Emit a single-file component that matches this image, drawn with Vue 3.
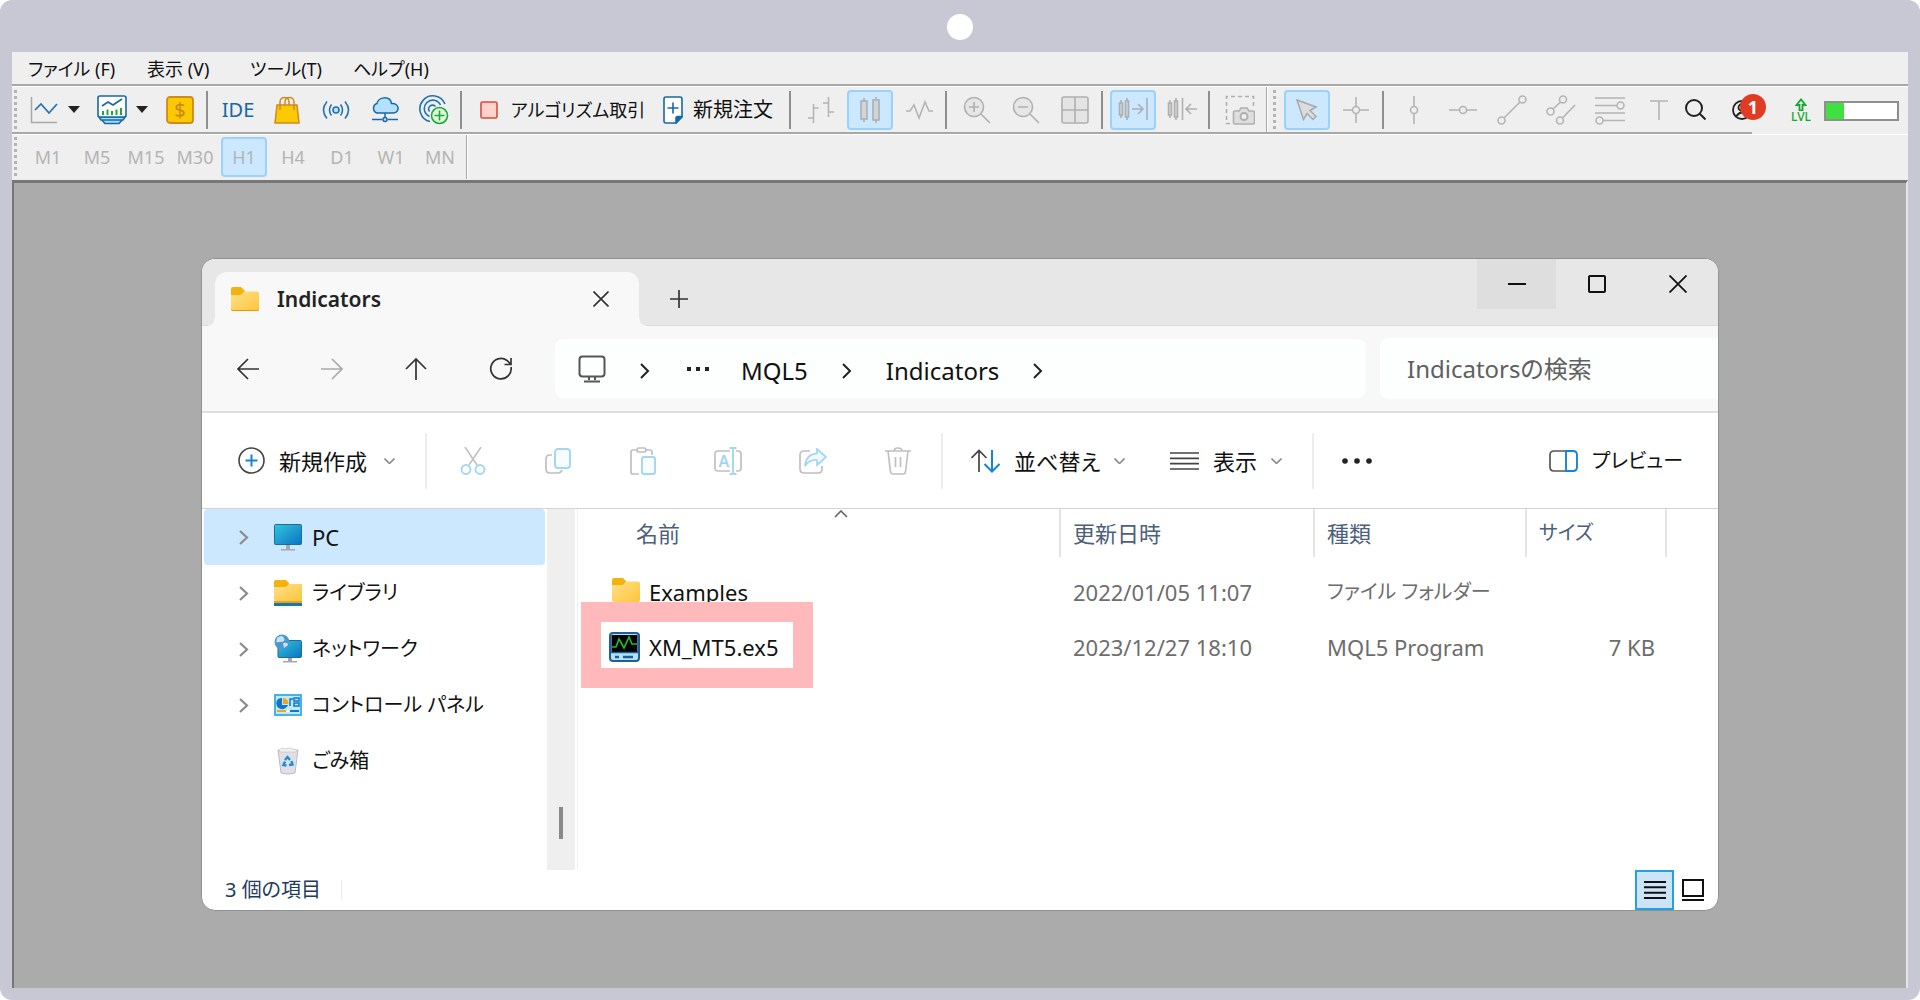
<script setup>
import { ref } from 'vue'

const menus = ['ファイル (F)', '表示 (V)', 'ツール(T)', 'ヘルプ(H)']
const periods = ['M1', 'M5', 'M15', 'M30', 'H1', 'H4', 'D1', 'W1', 'MN']
const period = ref('H1')
const search = ref('')
const tree = [
  { id: 'pc', label: 'PC', open: true, kana: false },
  { id: 'lib', label: 'ライブラリ', open: true, kana: true },
  { id: 'net', label: 'ネットワーク', open: true, kana: true },
  { id: 'cpl', label: 'コントロール パネル', open: true, kana: true },
  { id: 'bin', label: 'ごみ箱', open: false, kana: true },
]
const current = ref('pc')
</script>

<template>
  <div class="frame">
    <header class="bezel"><span class="camera"></span></header>
    <div class="app">
      <nav class="menu">
        <button v-for="m in menus" :key="m" class="menu-item">{{ m }}</button>
      </nav>

      <div class="bar">
        <div class="strip">
          <i class="grip"></i>
          <button class="tool drop" aria-label="Chart">
            <span class="face"><svg width="28" height="28" viewBox="0 0 28 28" fill="none"><path d="M1.500 1V26.500H27" stroke="#a8a8a8" stroke-width="1.500"/><path d="M5 14l6-6 8 9 8-9" stroke="#2273b4" stroke-width="1.700"/></svg></span>
            <svg class="tri" width="12" height="7" viewBox="0 0 12 7"><path d="M0 0h12L6 7z" fill="#222"/></svg>
          </button>
          <button class="tool drop" aria-label="Template">
            <span class="face"><svg width="30" height="30" viewBox="0 0 30 30" fill="none" stroke="#1668a8" stroke-width="1.600"><path d="M4 24l4 4.500h14l4-4.500z" fill="#a8dcff"/><path d="M2 22l2 3h22l2-3z" fill="#a8dcff"/><rect x="1" y="1" width="28" height="21" rx="2" fill="#fff"/><path d="M5 11l6-4 5 3 9-6"/><path d="M6 16v4M10.500 14.500V20M15 16v4M19.500 14.500V20M24 13v7" stroke="#1cab30" stroke-width="2"/></svg></span>
            <svg class="tri" width="12" height="7" viewBox="0 0 12 7"><path d="M0 0h12L6 7z" fill="#222"/></svg>
          </button>
          <button class="tool" aria-label="Symbols"><svg width="28" height="28" viewBox="0 0 28 28"><rect x="1" y="1" width="26" height="26" rx="3" fill="#fbc900" stroke="#cf8a1c" stroke-width="1.800"/><text x="14" y="21" text-anchor="middle" font-size="20" fill="#c98513">$</text></svg></button>
          <i class="sep"></i>
          <button class="tool ide">IDE</button>
          <button class="tool" aria-label="Market"><svg width="26" height="28" viewBox="0 0 26 28" fill="none" stroke="#cf8a1c" stroke-width="1.500"><path d="M3 9h20l2 18H1z" fill="#fbc900"/><path d="M6 14V6c0-6 9-6 9 0v3M11 9V6c0-6 9-6 9 0v8"/></svg></button>
          <button class="tool" aria-label="Signals"><svg width="28" height="20" viewBox="0 0 28 20" fill="none" stroke="#2273b4" stroke-width="1.600"><circle cx="14" cy="10" r="3" fill="#b5e0ff"/><path d="M9.500 4.500q-4 5.500 0 11M18.500 4.500q4 5.500 0 11M5 1.500q-7 8.500 0 17M23 1.500q7 8.500 0 17"/></svg></button>
          <button class="tool" aria-label="VPS"><svg width="28" height="26" viewBox="0 0 28 26" fill="none" stroke="#1668a8" stroke-width="1.500"><path d="M6 16a5 5 0 0 1 0-9.500C7 0 19-2 20.500 6.500 29 6 29 16 22 16z" fill="#b5e0ff"/><path d="M14 16v5M1 22.500h10M17 22.500h10"/><circle cx="14" cy="22.500" r="2" fill="#b5e0ff"/></svg></button>
          <button class="tool" aria-label="Copy trading"><svg width="30" height="30" viewBox="0 0 30 30" fill="none" stroke="#2273b4" stroke-width="1.600"><path d="M11 26.500A13 13 0 1 1 26 9M10.500 21.500A8.500 8.500 0 1 1 21.500 10M10.500 16.500a3.600 3.600 0 1 1 6-5"/><circle cx="20.500" cy="20.500" r="8" fill="#dff8df" stroke="#1cab30"/><path d="M20.500 15.500v10M15.500 20.500h10" stroke="#1cab30"/></svg></button>
          <i class="sep"></i>
          <button class="tool wide algo"><svg width="18" height="18" viewBox="0 0 18 18"><rect x="1" y="1" width="16" height="16" rx="1.500" fill="#ffd2cb" stroke="#dd4a3f" stroke-width="1.600"/></svg><span>アルゴリズム取引</span></button>
          <button class="tool wide order"><svg width="20" height="28" viewBox="0 0 20 28" fill="none" stroke="#1668a8" stroke-width="1.600"><path d="M3 1h14q2 0 2 2v18l-6 6H3q-2 0-2-2V3q0-2 2-2z" fill="#fff"/><path d="M13 27v-5q0-1.500 1.500-1.500H19z" fill="#1668a8"/><path d="M10 6.500v11M4.500 12h11"/></svg><span>新規注文</span></button>
          <i class="sep"></i>
          <button class="tool" aria-label="Bars"><svg width="28" height="28" viewBox="0 0 28 28" fill="none" stroke="#b4b4b4" stroke-width="1.600"><path d="M6.500 8v19M1 22h5.500M6.500 12h5M21.500 1v20M16 7h5.500M21.500 16H27"/></svg></button>
          <button class="tool on" aria-label="Candles"><svg width="24" height="28" viewBox="0 0 24 28" fill="#d4d4d4" stroke="#a9b0b5" stroke-width="1.600"><path d="M6 2v24M18 1v26"/><rect x="3" y="5" width="6" height="18"/><rect x="15" y="4" width="6" height="20"/></svg></button>
          <button class="tool" aria-label="Line"><svg width="28" height="20" viewBox="0 0 28 20" fill="none" stroke="#b4b4b4" stroke-width="1.600"><path d="M1 11h4l4-6 5 13 6-16 4 9h4"/></svg></button>
          <i class="sep"></i>
          <button class="tool" aria-label="Zoom in"><svg width="28" height="28" viewBox="0 0 28 28" fill="#e6e6e6" stroke="#b0b0b0" stroke-width="1.600"><circle cx="11" cy="11" r="9.500"/><path d="M18 18l9 9M11 6v10M6 11h10"/></svg></button>
          <button class="tool" aria-label="Zoom out"><svg width="28" height="28" viewBox="0 0 28 28" fill="#e6e6e6" stroke="#b0b0b0" stroke-width="1.600"><circle cx="11" cy="11" r="9.500"/><path d="M18 18l9 9M6 11h10"/></svg></button>
          <button class="tool" aria-label="Tile"><svg width="28" height="28" viewBox="0 0 28 28" fill="#e4e4e4" stroke="#b0b0b0" stroke-width="1.600"><rect x="1" y="1" width="26" height="26" rx="2"/><path d="M14 1v26M1 14h26"/></svg></button>
          <i class="sep"></i>
          <button class="tool on" aria-label="Auto scroll"><svg width="30" height="26" viewBox="0 0 30 26" fill="none" stroke="#a9b0b5" stroke-width="1.600"><path d="M3 3v18M9 1v22M29 1v22M14 12h11M20 7l5 5-5 5"/><path d="M1.500 6h3v12h-3zM7.500 4h3v16h-3z" fill="#d4d4d4"/></svg></button>
          <button class="tool" aria-label="Shift"><svg width="30" height="26" viewBox="0 0 30 26" fill="none" stroke="#b0b0b0" stroke-width="1.600"><path d="M3 3v18M9 1v22M15.500 1v22M30 12H19M24 7l-5 5 5 5"/><path d="M1.500 6h3v12h-3zM7.500 4h3v16h-3z" fill="#d4d4d4"/></svg></button>
          <i class="sep"></i>
          <button class="tool" aria-label="Screenshot"><svg width="30" height="30" viewBox="0 0 30 30" fill="none" stroke="#b0b0b0" stroke-width="1.600"><path d="M5 28.500H1.500V1.500h27V13" stroke-dasharray="4 3"/><path d="M10 16h4l2-3h6l2 3h4q1.500 0 1.500 1.500v10q0 1.500-1.500 1.500H10q-1.500 0-1.500-1.500v-10Q8.500 16 10 16z" fill="#dedede"/><circle cx="19" cy="21.500" r="3.500" fill="#eee" stroke-width="2"/></svg></button>
          <i class="edge"></i>
          <i class="grip second"></i>
          <button class="tool on" aria-label="Cursor"><svg width="22" height="22" viewBox="0 0 22 22"><path d="M1 1l19 7-6 3.500 6 6-3 3-6-6-3.500 6z" fill="#dcdcdc" stroke="#a9a9a9" stroke-width="1.500"/></svg></button>
          <button class="tool" aria-label="Crosshair"><svg width="28" height="28" viewBox="0 0 28 28" fill="none" stroke="#b4b4b4" stroke-width="1.600"><circle cx="14" cy="14" r="3.500"/><path d="M14 1v9.500M14 17.500V27M1 14h9.500M17.500 14H27"/></svg></button>
          <i class="sep"></i>
          <button class="tool" aria-label="Vertical line"><svg width="28" height="28" viewBox="0 0 28 28" fill="none" stroke="#b4b4b4" stroke-width="1.600"><circle cx="14" cy="14" r="3.500"/><path d="M14 0v10.500M14 17.500V28"/></svg></button>
          <button class="tool" aria-label="Horizontal line"><svg width="28" height="28" viewBox="0 0 28 28" fill="none" stroke="#b4b4b4" stroke-width="1.600"><circle cx="14" cy="14" r="3.500"/><path d="M0 14h10.500M17.500 14H28"/></svg></button>
          <button class="tool" aria-label="Trend line"><svg width="30" height="30" viewBox="0 0 30 30" fill="none" stroke="#b4b4b4" stroke-width="1.600"><circle cx="4.500" cy="25.500" r="3.500"/><circle cx="25.500" cy="4.500" r="3.500"/><path d="M7 23L23 7"/></svg></button>
          <button class="tool" aria-label="Channel"><svg width="30" height="30" viewBox="0 0 30 30" fill="none" stroke="#b4b4b4" stroke-width="1.600"><circle cx="4.500" cy="16.500" r="3.500"/><circle cx="17" cy="4.500" r="3.500"/><circle cx="14" cy="25.500" r="3.500"/><path d="M7 14l7.500-7M16.500 23L29 10"/></svg></button>
          <button class="tool" aria-label="Fibonacci"><svg width="30" height="30" viewBox="0 0 30 30" fill="none" stroke="#b4b4b4" stroke-width="1.600"><circle cx="25.500" cy="10.500" r="3.500"/><circle cx="4.500" cy="25.500" r="3.500"/><path d="M0 3h30M0 10.500h22M0 18h30M8 25.500h22"/></svg></button>
          <button class="tool" aria-label="Text"><svg width="20" height="22" viewBox="0 0 20 22" fill="none" stroke="#b4b4b4" stroke-width="1.600"><path d="M1 2h18M10 2v19"/></svg></button>
          <button class="plain find" aria-label="Search"><svg width="21" height="21" viewBox="0 0 21 21" fill="none" stroke="#222" stroke-width="2"><circle cx="9" cy="9" r="8"/><path d="M14.500 14.500l6 6"/></svg></button>
          <button class="plain account" aria-label="Account"><svg width="20" height="20" viewBox="0 0 20 20" fill="none" stroke="#222" stroke-width="1.800"><circle cx="10" cy="10" r="9"/><circle cx="10" cy="7.500" r="3.500"/><path d="M4 16.500q6-8 12 0"/></svg><b class="badge">1</b></button>
        </div>
        <div class="link">
          <span class="lvl"><svg width="12" height="13" viewBox="0 0 12 13" fill="none" stroke="#12a92c" stroke-width="1.800"><path d="M4.500 12.500V7H1.500L6 1.500 10.500 7h-3v5.500z"/></svg><span>LVL</span></span>
          <span class="meter"><i></i></span>
        </div>
      </div>

      <div class="periods">
        <i class="grip"></i>
        <button v-for="p in periods" :key="p" class="tool period" :class="{ on: p === period }" @click="period = p">{{ p }}</button>
        <i class="edge"></i>
      </div>

      <main class="desk">
        <section class="window">
          <div class="tabs">
            <div class="tab">
              <svg width="28" height="24" viewBox="0 0 28 24"><defs><linearGradient id="fold" x1="0" y1="0" x2="1" y2="1"><stop offset="0" stop-color="#ffe08a"/><stop offset="1" stop-color="#fdc63a"/></linearGradient></defs><path d="M0 10V2q0-2 2-2h8l4 4v6z" fill="#f3b30e"/><path d="M0 8h9q2 0 4-3.500h13q2 0 2 2V22q0 2-2 2H2q-2 0-2-2z" fill="url(#fold)"/><path d="M0 21.500Q0 24 2 24h24q2 0 2-2.500-1 1.500-2 1.500H2q-1 0-2-1.500z" fill="#de9a12"/></svg>
              <h1>Indicators</h1>
              <button class="plain" aria-label="Close tab"><svg width="16" height="16" viewBox="0 0 16 16" stroke="#333" stroke-width="1.700"><path d="M.5.5l15 15M15.500.5l-15 15"/></svg></button>
            </div>
            <button class="plain add" aria-label="New tab"><svg width="18" height="18" viewBox="0 0 18 18" stroke="#333" stroke-width="1.700"><path d="M9 0v18M0 9h18"/></svg></button>
            <div class="caption">
              <button class="plain min" aria-label="Minimize"><svg width="18" height="18" viewBox="0 0 18 18" stroke="#111" stroke-width="2"><path d="M0 9h18"/></svg></button>
              <button class="plain" aria-label="Maximize"><svg width="18" height="18" viewBox="0 0 18 18" stroke="#111" stroke-width="2" fill="none"><rect x="1" y="1" width="16" height="16" rx="1"/></svg></button>
              <button class="plain" aria-label="Close"><svg width="18" height="18" viewBox="0 0 18 18" stroke="#111" stroke-width="1.800"><path d="M.5.5l17 17M17.500.5l-17 17"/></svg></button>
            </div>
          </div>

          <div class="nav">
            <div class="moves">
              <button class="plain" aria-label="Back"><svg width="22" height="22" viewBox="0 0 22 22" fill="none" stroke="#333" stroke-width="1.700"><path d="M22 11H1M11 1L1 11l10 10"/></svg></button>
              <button class="plain" aria-label="Forward"><svg width="22" height="22" viewBox="0 0 22 22" fill="none" stroke="#a9a9a9" stroke-width="1.700"><path d="M0 11h21M11 1l10 10-10 10"/></svg></button>
              <button class="plain" aria-label="Up"><svg width="22" height="22" viewBox="0 0 22 22" fill="none" stroke="#333" stroke-width="1.700"><path d="M11 22V1M1 11L11 1l10 10"/></svg></button>
              <button class="plain" aria-label="Refresh"><svg width="24" height="24" viewBox="0 0 24 24" fill="none" stroke="#333" stroke-width="1.700"><path d="M22 10a10.200 10.200 0 1 1-4-6.500l3.500 3.500M22 1v6.500h-6.500"/></svg></button>
            </div>
            <div class="address">
              <svg width="28" height="28" viewBox="0 0 28 28" fill="none" stroke="#555" stroke-width="2"><rect x="1.500" y="1.500" width="25" height="20" rx="3"/><path d="M11 22v3M17 22v3M6 26.500h16"/></svg>
              <svg class="chev" width="10" height="16" viewBox="0 0 10 16" fill="none" stroke="#222" stroke-width="2"><path d="M1 1l7 7-7 7"/></svg>
              <svg class="dots" width="22" height="4" viewBox="0 0 22 4" fill="#222"><path d="M0 0h4v4H0zM9 0h4v4H9zM18 0h4v4h-4z"/></svg>
              <a href="#" class="crumb">MQL5</a>
              <svg class="chev" width="10" height="16" viewBox="0 0 10 16" fill="none" stroke="#222" stroke-width="2"><path d="M1 1l7 7-7 7"/></svg>
              <a href="#" class="crumb">Indicators</a>
              <svg class="chev" width="10" height="16" viewBox="0 0 10 16" fill="none" stroke="#222" stroke-width="2"><path d="M1 1l7 7-7 7"/></svg>
            </div>
            <input v-model="search" class="search" type="text" aria-label="検索" placeholder="Indicatorsの検索">
          </div>

          <div class="commands">
            <button class="plain cmd new"><svg width="27" height="27" viewBox="0 0 27 27" fill="none" stroke="#444" stroke-width="1.600"><circle cx="13.500" cy="13.500" r="12.500"/><path d="M13.500 7.500v12M7.500 13.500h12" stroke="#1683d8" stroke-width="2"/></svg><span>新規作成</span><svg class="down" width="11" height="6" viewBox="0 0 11 6" fill="none" stroke="#8a8a8a" stroke-width="1.600"><path d="M.5.5l5 5 5-5"/></svg></button>
            <i class="rule"></i>
            <div class="edits">
              <button class="plain" aria-label="Cut"><svg width="26" height="28" viewBox="0 0 26 28" fill="none" stroke="#c0c0c0" stroke-width="1.600"><path d="M5 0l12 18M21 0L9 18"/><g stroke="#a3d5f5" stroke-width="1.900"><circle cx="6" cy="22.500" r="4.500"/><circle cx="20" cy="22.500" r="4.500"/></g></svg></button>
              <button class="plain" aria-label="Copy"><svg width="26" height="26" viewBox="0 0 26 26" fill="none" stroke="#c0c0c0" stroke-width="1.700"><path d="M7 7H5Q1 7 1 11v10q0 4 4 4h8q3 0 4-3"/><rect x="10" y="1" width="15" height="19" rx="3" stroke="#a3d5f5" stroke-width="1.900" fill="#f7fcff"/></svg></button>
              <button class="plain" aria-label="Paste"><svg width="26" height="28" viewBox="0 0 26 28" fill="none" stroke="#c0c0c0" stroke-width="1.700"><path d="M9 27H3q-2 0-2-2V5q0-2 2-2h4M16 3h4q2 0 2 2v3"/><rect x="7" y="1" width="9" height="4" rx="2"/><rect x="12" y="10" width="13" height="17" rx="2" stroke="#a3d5f5" stroke-width="1.900" fill="#f7fcff"/></svg></button>
              <button class="plain" aria-label="Rename"><svg width="28" height="28" viewBox="0 0 28 28" fill="none" stroke="#c0c0c0" stroke-width="1.700"><path d="M16 24H4q-3 0-3-3V7q0-3 3-3h12M22 4h2q3 0 3 3v14q0 3-3 3h-2"/><path d="M15.500 1h7M15.500 27h7M19 1v26" stroke="#a3d5f5" stroke-width="1.900"/><text x="10" y="20" text-anchor="middle" font-size="16" stroke="none" fill="#a3d5f5" font-weight="600">A</text></svg></button>
              <button class="plain" aria-label="Share"><svg width="28" height="26" viewBox="0 0 28 26" fill="none" stroke="#c0c0c0" stroke-width="1.700"><path d="M11 3H5Q1 3 1 7v14q0 4 4 4h14q4 0 4-4v-3"/><path d="M18 1l9 8-9 8v-5q-8-.5-12 6Q7 6 18 5.500z" stroke="#a3d5f5" fill="#f2faff"/></svg></button>
              <button class="plain" aria-label="Delete"><svg width="26" height="28" viewBox="0 0 26 28" fill="none" stroke="#c0c0c0" stroke-width="1.700"><path d="M0 4h26M9 4q0-3 4-3t4 3M3 4l2.500 21q.3 2 2 2h11q1.700 0 2-2L23 4M10.500 10v10M15.500 10v10"/></svg></button>
            </div>
            <i class="rule"></i>
            <button class="plain cmd sort"><svg width="29" height="24" viewBox="0 0 29 24" fill="none" stroke="#444" stroke-width="1.700"><path d="M8 23V2M.5 9L8 1.500 15.500 9"/><path d="M21 1v21M13.500 15l7.500 7.500 7.500-7.500" stroke="#1683d8" stroke-width="2"/></svg><span>並べ替え</span><svg class="down" width="11" height="6" viewBox="0 0 11 6" fill="none" stroke="#8a8a8a" stroke-width="1.600"><path d="M.5.5l5 5 5-5"/></svg></button>
            <button class="plain cmd view"><svg width="29" height="18" viewBox="0 0 29 18" stroke="#444" stroke-width="1.700"><path d="M0 1h29M0 6.300h29M0 11.700h29M0 17h29"/></svg><span>表示</span><svg class="down" width="11" height="6" viewBox="0 0 11 6" fill="none" stroke="#8a8a8a" stroke-width="1.600"><path d="M.5.5l5 5 5-5"/></svg></button>
            <i class="rule"></i>
            <button class="plain more" aria-label="More"><svg width="30" height="6" viewBox="0 0 30 6" fill="#222"><circle cx="3" cy="3" r="2.800"/><circle cx="15" cy="3" r="2.800"/><circle cx="27" cy="3" r="2.800"/></svg></button>
            <button class="plain cmd preview"><svg width="29" height="22" viewBox="0 0 29 22" fill="none" stroke="#555" stroke-width="1.700"><path d="M17 1H5Q1 1 1 5v12q0 4 4 4h12"/><path d="M17 1h7q4 0 4 4v12q0 4-4 4h-7z" stroke="#1683d8" stroke-width="1.900"/></svg><span class="kana">プレビュー</span></button>
          </div>

          <div class="body">
            <nav class="tree">
              <button v-for="t in tree" :key="t.id" class="node" :class="{ picked: t.id === current }" @click="current = t.id">
                <span class="twist"><svg v-if="t.open" width="10" height="15" viewBox="0 0 10 15" fill="none" stroke="#8a8a8a" stroke-width="2.200"><path d="M1 1l7 6.500L1 14"/></svg></span>
                <span class="glyph">
                  <svg v-if="t.id === 'pc'" width="28" height="28" viewBox="0 0 28 28"><defs><linearGradient id="scr" x1="0" y1="0" x2="1" y2="1"><stop offset="0" stop-color="#34c5dc"/><stop offset="1" stop-color="#0a72c4"/></linearGradient></defs><rect x=".5" y="1.500" width="27" height="20" rx="1" fill="url(#scr)" stroke="#1b6f93"/><path d="M12 22h4v4h5v1.500H7V26h5z" fill="#a5a5b5"/></svg>
                  <svg v-else-if="t.id === 'lib'" width="28" height="28" viewBox="0 0 28 28"><path d="M0 8V3q0-2 2-2h10l3 3v4z" fill="#f3b30e"/><path d="M0 8h12l3-3h13v17H0z" fill="url(#fold)"/><path d="M0 22h28v2H0z" fill="#e8a51a"/><path d="M0 24h28v3H0z" fill="#1276bb"/></svg>
                  <svg v-else-if="t.id === 'net'" width="28" height="30" viewBox="0 0 28 30"><rect x="4" y="6.500" width="23.500" height="17" rx="1" fill="url(#scr)" stroke="#1b6f93"/><path d="M14 24h4v3h5v1.500H9V27h5z" fill="#a5a5b5"/><circle cx="8" cy="8" r="7.500" fill="#4d97cc"/><path d="M3 4q5-4 7 0t-4 4-4 1zM9 9q5-1 5 2l-4 3z" fill="#c5e3f5"/></svg>
                  <svg v-else-if="t.id === 'cpl'" width="28" height="22" viewBox="0 0 28 22"><rect x="1" y="1" width="26" height="20" fill="#bfe9fd" stroke="#46b2e8" stroke-width="2"/><path d="M4 5a6 6 0 1 0 10 6H8V4q-2 0-4 1z" fill="#1276c8"/><path d="M9 4q5 0 5.500 6H9z" fill="#f0a31c"/><path d="M16 12V5h3M20 4h5v3h-5zM20 9h5v3h-5z" fill="none" stroke="#1276c8" stroke-width="1.500"/><path d="M3 17h9" stroke="#f0a31c" stroke-width="2"/><path d="M13 17h3" stroke="#fff" stroke-width="2"/><path d="M16 17h9" stroke="#1276c8" stroke-width="2"/></svg>
                  <svg v-else width="28" height="28" viewBox="0 0 28 28"><path d="M4 3h20l-3 23q-7 2-14 0z" fill="#dfe0e3" stroke="#b9bcc0"/><path d="M5 3l3-2 3 1 4-1 4 1 4 1-1 2H6z" fill="#f2f2f2" stroke="#c8c8c8" stroke-width=".8"/><path d="M11 13l2.500-3 2.500 3M17.500 14l1 3.500-3.500.5M12.500 18.500L9.500 18l1.500-3.500" fill="none" stroke="#1b8bdb" stroke-width="2.400"/></svg>
                </span>
                <span :class="{ kana: t.kana }">{{ t.label }}</span>
              </button>
            </nav>
            <div class="scroll"><i></i></div>
            <div class="files">
              <svg class="asc" width="14" height="8" viewBox="0 0 14 8" fill="none" stroke="#666" stroke-width="1.600"><path d="M1 7l6-6 6 6"/></svg>
              <table>
                <colgroup><col><col class="c-date"><col class="c-type"><col class="c-size"><col class="c-rest"></colgroup>
                <thead>
                  <tr><th><span>名前</span></th><th><span>更新日時</span></th><th><span>種類</span></th><th><span class="kana">サイズ</span></th><th></th></tr>
                </thead>
                <tbody>
                  <tr>
                    <td><div class="name"><svg width="31" height="30" viewBox="-1 0 31 30"><path d="M2 8V3q0-2 2-2h9l3 3v4z" fill="#f3b30e"/><path d="M2 8h11l3-3.500h12q2 0 2 2V23q0 2-2 2H4q-2 0-2-2z" fill="url(#fold)"/></svg><span>Examples</span></div></td>
                    <td>2022/01/05 11:07</td><td class="kana">ファイル フォルダー</td><td></td><td></td>
                  </tr>
                  <tr>
                    <td><div class="name"><svg width="31" height="30" viewBox="0 0 31 30" fill="none"><rect x="1" y="1" width="29" height="28" rx="3" fill="#b5e0ff" stroke="#1c6096" stroke-width="2"/><path d="M2.500 3h26v17h-26z" fill="#000"/><path d="M1 20.500h29" stroke="#1c6096" stroke-width="1.500"/><path d="M3 15h4l3-8 5 9 5-11 3 7h5" stroke="#17c12f" stroke-width="1.600"/><path d="M6 25h4M14 25h10" stroke="#1c6096" stroke-width="2.400"/></svg><span>XM_MT5.ex5</span></div><i class="mark"></i></td>
                    <td>2023/12/27 18:10</td><td>MQL5 Program</td><td class="num">7 KB</td><td></td>
                  </tr>
                </tbody>
              </table>
            </div>
          </div>

          <footer class="status">
            <span class="count">3 個の項目</span>
            <button class="plain details" aria-label="Details"><svg width="22" height="18" viewBox="0 0 22 18" stroke="#111" stroke-width="2"><path d="M0 1h22M0 6.300h22M0 11.700h22M0 17h22"/></svg></button>
            <button class="plain thumbs" aria-label="Thumbnails"><svg width="22" height="22" viewBox="0 0 22 22" fill="none" stroke="#111" stroke-width="2"><path d="M1 1h20v16H1zM0 21h22"/></svg></button>
          </footer>
        </section>
      </main>
    </div>
  </div>
</template>

<style>
body { margin: 0; background: #fff; }
</style>

<style scoped>
* { box-sizing: border-box; }
.frame {
  min-height: 100vh;
  padding: 0 12px 12px;
  display: flex;
  flex-direction: column;
  background: #c8c7d4;
  border-radius: 12px;
  color: #111;
  font-family: "Noto Sans", "Noto Sans CJK JP", sans-serif;
  font-feature-settings: "palt";
}
svg { display: block; flex: none; }
button, input { font: inherit; font-feature-settings: inherit; color: inherit; padding: 0; margin: 0; border: 0; background: none; }
a { color: inherit; text-decoration: none; }
.bezel { height: 52px; padding-top: 2px; display: flex; align-items: center; justify-content: center; }
.camera { width: 26px; height: 26px; border-radius: 50%; background: #fff; }
.app { flex: 1; display: flex; flex-direction: column; background: #efefef; }

.menu { height: 34px; display: grid; grid-template-columns: 119px 103px 103px auto; justify-content: start; align-items: center; padding: 2px 0 0 16px; border-bottom: 2px solid #a8a8a8; font-size: 18px; line-height: 24px; white-space: nowrap; }
.menu-item { text-align: left; }
.bar { height: 48px; display: flex; border-top: 1px solid #fff; }
.strip { flex: 1; min-width: 0; display: flex; align-items: center; gap: 3px; border-bottom: 2px solid #a8a8a8; }
.grip { width: 4px; height: 40px; margin: 0 0 0 2px; background: repeating-linear-gradient(#b4b4b4 0 3px, #efefef 3px 6px); border-right: 1px solid #efefef; flex: none; }
.second { margin-right: 4px; }
.tool { width: 46px; height: 40px; flex: none; display: flex; align-items: center; justify-content: center; border: 1px solid transparent; border-radius: 4px; }
.tool.on { background: #cce8ff; border: 2px solid #99d1ff; }
.drop { width: 65px; justify-content: flex-start; }
.face { width: 44px; display: flex; justify-content: center; }
.tri { margin-left: 2px; }
.sep { width: 2px; height: 38px; margin-right: 4px; background: #8f8f8f; flex: none; }
.edge { width: 2px; align-self: stretch; background: #a8a8a8; border-right: 1px solid #fff; flex: none; }
.ide { color: #1668a8; font-size: 20px; }
.wide { justify-content: flex-start; font-size: 20px; line-height: 28px; white-space: nowrap; padding-left: 10px; }
.algo { width: 180px; gap: 13px; font-size: 18px; }
.order { width: 134px; gap: 10px; }
.plain { display: flex; align-items: center; justify-content: center; flex: none; }
.find { margin-left: auto; margin-right: 23px; }
.account { position: relative; }
.badge { position: absolute; left: 8px; top: -6px; width: 26px; height: 26px; border-radius: 50%; background: #e03c24; color: #fff; font-size: 18px; line-height: 26px; text-align: center; }
.link { width: 156px; display: flex; align-items: center; justify-content: flex-end; gap: 13px; padding-right: 9px; }
.lvl { display: flex; flex-direction: column; align-items: center; color: #12a92c; font-size: 12px; line-height: 12px; font-weight: 500; }
.meter { width: 75px; height: 20px; border: 2px solid #8f8f8f; background: #fff; }
.meter i { display: block; width: 25%; height: 100%; background: #40e040; }
.periods { height: 46px; display: flex; align-items: center; gap: 3px; padding-bottom: 1px; border-top: 1px solid #fff; }
.periods .grip { margin-right: 4px; }
.period { color: #b4b4b4; font-size: 18px; }
.desk { flex: 1; background: #ababab; border: solid #777; border-width: 3px 2px 0; border-right-color: #e6e6e6; padding: 75px 187px; }

.window { border: 1px solid #909090; border-radius: 14px; overflow: hidden; background: #fff; font-size: 22px; line-height: 30px; }
.tabs { height: 67px; display: flex; align-items: flex-end; background: #e7e7e7; border-bottom: 1px solid #dcdcdc; }
.tab { position: relative; width: 424px; height: 54px; margin: 0 0 -1px 13px; padding: 0 30px 0 16px; display: flex; align-items: center; background: #f8f8f8; border-radius: 12px 12px 0 0; }
.tab::before, .tab::after { content: ""; position: absolute; bottom: 0; width: 7px; height: 7px; }
.tab::before { right: 100%; background: radial-gradient(circle at 0 0, #e7e7e7 6px, #f8f8f8 7px); }
.tab::after { left: 100%; background: radial-gradient(circle at 100% 0, #e7e7e7 6px, #f8f8f8 7px); }
.tab h1 { flex: 1; margin: 0 0 0 18px; font-size: 21px; line-height: 28px; font-weight: 600; color: #222; }
.add { margin: 0 0 17px 31px; }
.caption { margin-left: auto; align-self: flex-start; display: flex; }
.caption .plain { width: 81px; height: 50px; }
.caption .min { background: #dedede; width: 79px; }
.nav { display: flex; align-items: center; padding: 12px 0; background: #f8f8f8; border-bottom: 2px solid #dedede; }
.moves { width: 353px; padding-left: 35px; display: flex; gap: 62px; }
.address { flex: 1; height: 59px; display: flex; align-items: center; padding-left: 23px; background: #fdfefe; border-radius: 8px; font-size: 24px; }
.address .chev { margin: 4px 34px 0; }
.address .dots { margin: 0 32px 0 3px; }
.crumb { line-height: 32px; padding-top: 4px; }
.search { width: 338px; height: 61px; margin-left: 14px; padding-left: 27px; background: #fdfefe; border-radius: 8px 0 0 8px; font-size: 24px; }
.search::placeholder { color: #606060; opacity: 1; }
.commands { height: 96px; display: flex; align-items: center; border-bottom: 1px solid #d4d4d4; white-space: nowrap; }
.cmd { gap: 14px; justify-content: flex-start; }
.cmd .down { margin-left: auto; }
.new { margin-left: 36px; width: 157px; }
.rule { width: 2px; height: 56px; margin: 0 28px 0 30px; background: #ececec; flex: none; }
.edits { display: flex; gap: 58px; margin-left: 4px; }
.edits .plain { width: 27px; }
.sort { width: 149px; }
.view { margin-left: 50px; width: 112px; }
.preview { margin-left: auto; margin-right: 35px; }
.kana { font-size: 20px; }
.body { min-height: 361px; display: flex; }
.tree { width: 345px; padding: 0 2px; }
.node { width: 100%; height: 56px; display: flex; align-items: center; border-radius: 4px; white-space: nowrap; }
.picked { background: #cce8ff; }
.twist { width: 35px; margin-left: 35px; }
.glyph { width: 38px; }
.scroll { width: 28px; background: #efefef; padding-top: 298px; }
.scroll i { display: block; width: 4px; height: 32px; margin: 0 auto; background: #8a8a8a; }
.files { flex: 1; position: relative; margin-left: 2px; border-left: 1px solid #efefef; }
.asc { position: absolute; left: 256px; top: 1px; }
table { width: 100%; table-layout: fixed; border-collapse: collapse; text-align: left; white-space: nowrap; }
.c-date { width: 254px; }
.c-type { width: 212px; }
.c-size { width: 140px; }
.c-rest { width: 51px; }
th { padding: 0 0 7px; height: 55px; font-weight: 400; color: #4c607a; vertical-align: top; }
th span { display: block; height: 48px; line-height: 48px; padding-left: 12px; border-right: 2px solid #e4e4e4; }
th:first-child span { padding-left: 58px; }
td { height: 55px; padding: 0 0 0 12px; color: #6d6d6d; position: relative; }
td:first-child { padding-left: 31px; color: #111; }
.num { text-align: right; padding-right: 12px; }
.name { display: flex; align-items: center; gap: 9px; }
.mark { position: absolute; left: 3px; top: -17px; width: 232px; height: 86px; border: 20px solid #ffb9bb; }
.status { height: 40px; display: flex; align-items: center; color: #1f3b5e; font-size: 20px; }
.count { margin-left: 23px; padding-right: 20px; border-right: 1px solid #ececec; line-height: 20px; }
.details { margin-left: auto; width: 39px; height: 40px; background: #cce4f5; border: 2px solid #26a0e4; }
.thumbs { margin: 0 14px 0 8px; }
</style>
